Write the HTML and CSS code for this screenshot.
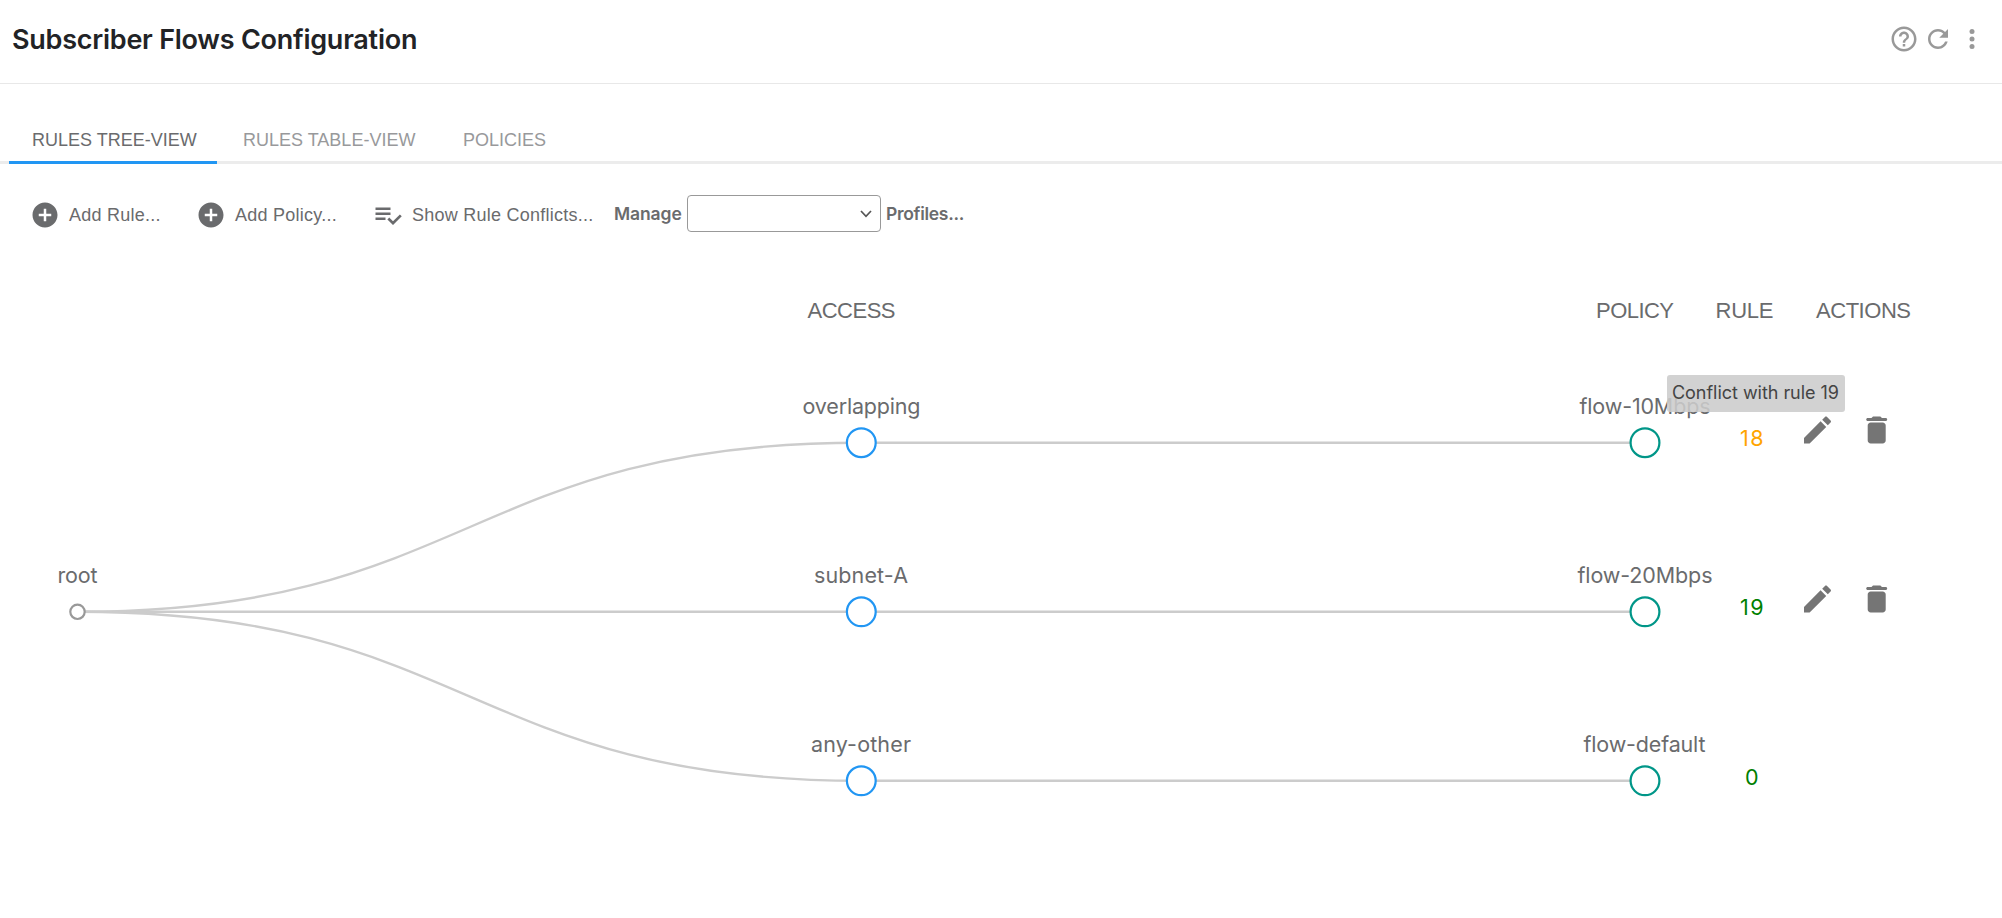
FILE: index.html
```html
<!DOCTYPE html>
<html lang="en">
<head>
<meta charset="utf-8">
<title>Subscriber Flows Configuration</title>
<link rel="stylesheet" href="styles.css">
</head>
<body>
<header class="header">
  <h1 class="title">Subscriber Flows Configuration</h1>
  <div class="header-actions">
    <svg class="icon" viewBox="0 0 24 24"><path d="M11 18h2v-2h-2v2zm1-16C6.480 2 2 6.480 2 12s4.480 10 10 10 10-4.480 10-10S17.520 2 12 2zm0 18c-4.410 0-8-3.590-8-8s3.590-8 8-8 8 3.590 8 8-3.590 8-8 8zm0-14c-2.210 0-4 1.790-4 4h2c0-1.100.9-2 2-2s2 .9 2 2c0 2-3 1.750-3 5h2c0-2.250 3-2.500 3-5 0-2.210-1.790-4-4-4z"/></svg>
    <svg class="icon" viewBox="0 0 24 24"><path d="M17.650 6.350C16.200 4.900 14.210 4 12 4c-4.420 0-7.990 3.580-7.990 8s3.570 8 7.990 8c3.730 0 6.840-2.550 7.730-6h-2.080c-.82 2.330-3.040 4-5.650 4-3.310 0-6-2.690-6-6s2.690-6 6-6c1.660 0 3.140.69 4.220 1.780L13 11h7V4l-2.350 2.350z"/></svg>
    <svg class="icon" viewBox="0 0 24 24"><circle cx="12" cy="6" r="2"/><circle cx="12" cy="12" r="2"/><circle cx="12" cy="18" r="2"/></svg>
  </div>
</header>

<nav class="tabs">
  <a class="tab tab-active">RULES TREE-VIEW</a>
  <a class="tab tab-table">RULES TABLE-VIEW</a>
  <a class="tab">POLICIES</a>
</nav>

<div class="toolbar">
  <div class="tool tool-rule">
    <svg class="icon" viewBox="0 0 24 24"><path d="M12 2C6.480 2 2 6.480 2 12s4.480 10 10 10 10-4.480 10-10S17.520 2 12 2zm5 11h-4v4h-2v-4H7v-2h4V7h2v4h4v2z"/></svg>
    <span class="tool-text">Add Rule...</span>
  </div>
  <div class="tool tool-policy">
    <svg class="icon" viewBox="0 0 24 24"><path d="M12 2C6.480 2 2 6.480 2 12s4.480 10 10 10 10-4.480 10-10S17.520 2 12 2zm5 11h-4v4h-2v-4H7v-2h4V7h2v4h4v2z"/></svg>
    <span class="tool-text">Add Policy...</span>
  </div>
  <div class="tool tool-conflicts">
    <svg class="icon" viewBox="0 0 24 24"><path d="M14 10H2v2h12v-2zm0-4H2v2h12V6zM2 16h8v-2H2v2zm19.500-4.500L23 13l-6.990 7-4.510-4.500L13 14l3.010 3 5.490-5.500z"/></svg>
    <span class="tool-text">Show Rule Conflicts...</span>
  </div>
  <div class="manage">
    <span class="manage-label">Manage</span>
    <div class="select"><svg class="chevron" viewBox="0 0 12 8"><path d="M1 1l5 5.300L11 1"/></svg></div>
    <span class="profiles-label">Profiles...</span>
  </div>
</div>

<svg class="tree" viewBox="0 250 2002 660">
  <defs>
    <path id="edit" d="M3 17.250V21h3.750L17.810 9.940l-3.750-3.750L3 17.250zM20.710 7.040c.39-.39.39-1.020 0-1.410l-2.340-2.340c-.39-.39-1.020-.39-1.410 0l-1.830 1.830 3.750 3.750 1.830-1.830z"/>
    <path id="trash" d="M6 19c0 1.100.9 2 2 2h8c1.100 0 2-.9 2-2V9c0-1.100-.9-2-2-2H8c-1.100 0-2 .9-2 2v10zM18 4h-2.500l-.71-.71c-.18-.18-.44-.29-.7-.29H9.910c-.26 0-.52.11-.7.29L8.500 4H6c-.55 0-1 .45-1 1s.45 1 1 1h12c.55 0 1-.45 1-1s-.45-1-1-1z"/>
  </defs>

  <g class="heading">
    <text x="807.500" y="318" textLength="88">ACCESS</text>
    <text x="1596" y="318" textLength="78">POLICY</text>
    <text x="1715.500" y="318" textLength="58">RULE</text>
    <text x="1816" y="318" textLength="95">ACTIONS</text>
  </g>

  <g class="link">
    <path d="M77.500 611.800C469.400 611.800 469.400 442.700 861.300 442.700H1645"/>
    <path d="M77.500 611.800H1645"/>
    <path d="M77.500 611.800C469.400 611.800 469.400 780.800 861.300 780.800H1645"/>
  </g>

  <circle class="node node-root" cx="77.500" cy="611.800" r="7.200"/>
  <circle class="node node-access" cx="861.300" cy="442.700" r="14.400"/>
  <circle class="node node-access" cx="861.300" cy="611.800" r="14.400"/>
  <circle class="node node-access" cx="861.300" cy="780.800" r="14.400"/>
  <circle class="node node-policy" cx="1645" cy="442.700" r="14.400"/>
  <circle class="node node-policy" cx="1645" cy="611.800" r="14.400"/>
  <circle class="node node-policy" cx="1645" cy="780.800" r="14.400"/>

  <g class="label">
    <text x="57.500" y="583" textLength="40">root</text>
    <text x="802.500" y="414" textLength="118">overlapping</text>
    <text x="814" y="583" textLength="94">subnet-A</text>
    <text x="811" y="752" textLength="100">any-other</text>
    <text x="1579.500" y="414" textLength="131">flow-10Mbps</text>
    <text x="1577.500" y="583" textLength="135">flow-20Mbps</text>
    <text x="1583.500" y="752" textLength="122">flow-default</text>
  </g>

  <g class="rule">
    <text class="rule-conflict" x="1740" y="446" textLength="23.500">18</text>
    <text x="1740" y="615" textLength="23.500">19</text>
    <text x="1745" y="785">0</text>
  </g>

  <g class="action">
    <use href="#edit" transform="translate(1799.500 412) scale(1.500)"/>
    <use href="#trash" transform="translate(1858.700 412) scale(1.500)"/>
    <use href="#edit" transform="translate(1799.500 581) scale(1.500)"/>
    <use href="#trash" transform="translate(1858.700 581) scale(1.500)"/>
  </g>

  <rect class="tip" x="1667" y="375" width="178" height="37" rx="3"/>
  <text class="tip-text" x="1672" y="399" textLength="167">Conflict with rule 19</text>
</svg>
</body>
</html>
```

FILE: styles.css
```css
* {
  box-sizing: border-box;
}

body {
  margin: 0;
  height: 918px;
  overflow: hidden;
  background: #fff;
  color: #6a6b6d;
  font-family: "Liberation Sans", Arial, sans-serif;
  font-size: 18px;
}

.icon {
  display: block;
  flex: none;
  width: 30px;
  height: 30px;
  fill: currentColor;
}

.header {
  display: flex;
  align-items: center;
  justify-content: space-between;
  height: 84px;
  padding: 0 15px 6px 12px;
  border-bottom: 1px solid #e8e8e8;
}

.title {
  margin: 0;
  padding-top: 2px;
  color: #222326;
  font-family: Inter, sans-serif;
  font-size: 27px;
  font-weight: 600;
  letter-spacing: -0.25px;
}

.header-actions {
  display: flex;
  gap: 4px;
  color: #999;
}

.tabs {
  display: flex;
  height: 80px;
  padding: 34px 9px 0;
  border-bottom: 3px solid #ececec;
}

.tab {
  height: 46px;
  padding: 10px 0 0 23px;
  line-height: 24px;
  color: #98999b;
  white-space: nowrap;
  border-bottom: 3px solid transparent;
}

.tab-active {
  width: 208px;
  margin-right: 3px;
  color: #6a6b6d;
  border-bottom-color: #2196f3;
}

.tab-table {
  width: 220px;
}

.toolbar {
  display: flex;
  align-items: center;
  height: 86px;
  padding: 15px 30px 0;
}

.tool {
  display: flex;
  align-items: center;
  gap: 9px;
  white-space: nowrap;
}

.tool-text {
  padding-top: 1px;
  letter-spacing: 0.25px;
}

.tool-rule {
  width: 166px;
}

.tool-policy {
  width: 177px;
}

.tool-conflicts {
  width: 241px;
}

.manage {
  display: flex;
  align-items: center;
  height: 37px;
  margin-top: -2px;
  font-family: Inter, sans-serif;
  font-size: 17.5px;
  font-weight: 600;
  letter-spacing: -0.1px;
}

.manage-label {
  width: 73px;
}

.select {
  display: flex;
  align-items: center;
  justify-content: flex-end;
  width: 194px;
  height: 37px;
  margin-right: 5px;
  padding-right: 8px;
  border: 1px solid #999;
  border-radius: 4px;
}

.chevron {
  width: 12px;
  height: 8px;
  fill: none;
  stroke: #555;
  stroke-width: 1.7;
}

.profiles-label {
  letter-spacing: -0.3px;
}

.tree {
  display: block;
  width: 2002px;
  height: 660px;
}

.heading {
  font-size: 22px;
  fill: #6a6b6d;
}

.label {
  font-family: Inter, sans-serif;
  font-size: 21.5px;
  fill: #6a6b6d;
}

.link {
  fill: none;
  stroke: #ccc;
  stroke-width: 2.4;
}

.node {
  fill: #fff;
  stroke-width: 2.2;
}

.node-root {
  stroke: #999;
}

.node-access {
  stroke: #2196f3;
}

.node-policy {
  stroke: #009688;
}

.rule {
  font-family: Inter, sans-serif;
  font-size: 21.5px;
  fill: #008000;
}

.rule-conflict {
  fill: #ffa500;
}

.action {
  fill: #757575;
}

.tip {
  fill: #ccc;
  fill-opacity: 0.88;
}

.tip-text {
  font-family: Inter, sans-serif;
  font-size: 18px;
  fill: #444;
}
```
